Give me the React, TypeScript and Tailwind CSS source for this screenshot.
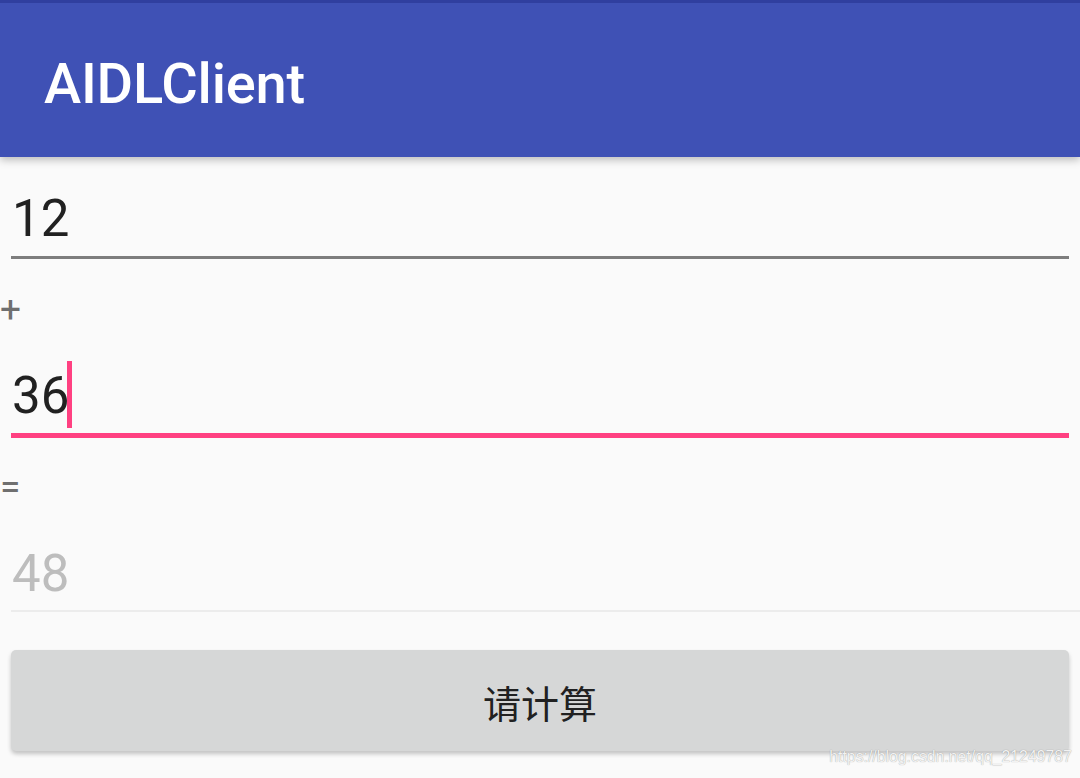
import React from "react";

export default function App() {
  return (
    <div className="relative w-[1080px] h-[778px] overflow-hidden bg-[#fafafa]" style={{ fontFamily: "Roboto, 'Noto Sans', sans-serif" }}>
      <div className="relative z-10 h-[157px] bg-[#3f51b5] border-t-[3px] border-[#303f9f] shadow-[0_3px_8px_rgba(0,0,0,0.25)]">
        <div className="pt-[53px] pl-[44px] text-[56px] leading-[56px] font-medium text-white tracking-[-0.2px]">AIDLClient</div>
      </div>

      <div className="flex flex-col">
        {/* field 1 */}
        <div className="mx-[11px] mt-[36px] text-[51px] leading-[52px] text-[#212121] pl-[1px]">12</div>
        <div className="mx-[11px] mt-[11px] h-[3px] bg-[#7d7d7d]" />

        <div className="mt-[32px] text-[37px] leading-[37px] text-[#6f6f6f]">+</div>

        {/* field 2 */}
        <div className="mx-[11px] mt-[42px] text-[51px] leading-[52px] text-[#212121] pl-[1px]">
          <span className="relative">
            36
            <span className="absolute left-full -ml-[2px] top-[-5px] w-[5px] h-[67px] bg-[#ff4081]" />
          </span>
        </div>
        <div className="mx-[11px] mt-[11px] h-[5px] bg-[#ff4081]" />

        <div className="mt-[30px] text-[37px] leading-[37px] text-[#6f6f6f]">=</div>

        {/* field 3 */}
        <div className="mx-[11px] mt-[43px] text-[51px] leading-[52px] text-[#bdbdbd] pl-[1px]">48</div>
        <div className="ml-[11px] mt-[10px] h-[2px] bg-[#ececec]" />

        {/* button */}
        <div className="mx-[11px] mt-[38px] h-[101px] rounded-[5px] bg-[#d6d7d7] shadow-[0_3px_4px_rgba(0,0,0,0.22)] flex items-center justify-center">
          <span className="text-[38px] leading-[38px] text-[#212121] mt-[2px]" style={{ fontFamily: "'Noto Sans CJK SC', 'Noto Sans', sans-serif" }}>请计算</span>
        </div>
      </div>

      <div
        className="absolute right-[8px] top-[747px] text-[17px] leading-[20px] text-[#f2f2f2] origin-right scale-x-[0.93] [text-shadow:0_0_1px_rgba(0,0,0,0.4)]"
        style={{ fontFamily: "'Liberation Sans', Arial, sans-serif" }}
      >
        https://blog.csdn.net/qq_21249787
      </div>
    </div>
  );
}
